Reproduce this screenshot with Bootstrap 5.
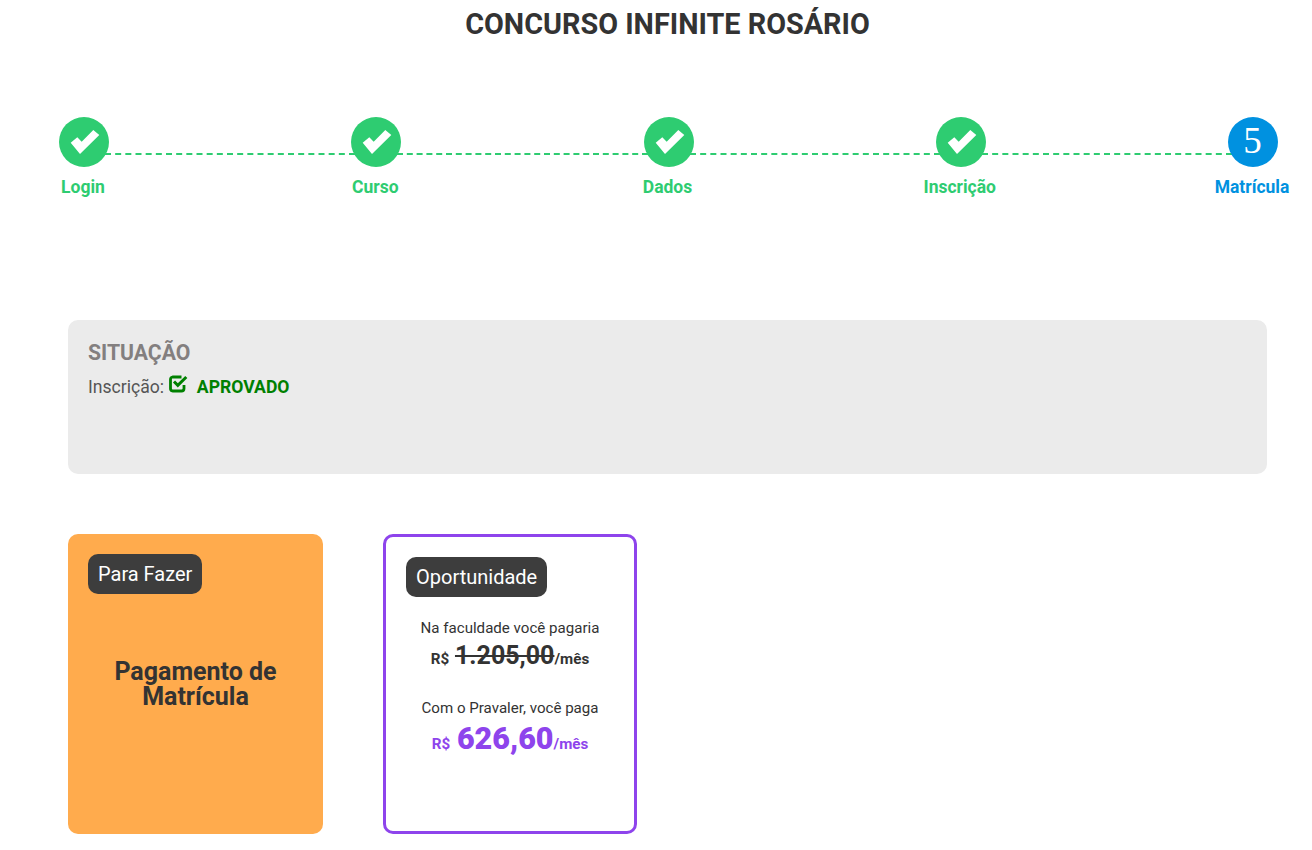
<!DOCTYPE html>
<html lang="pt-BR">
<head>
    <meta charset="UTF-8">
    <meta name="viewport" content="width=device-width, initial-scale=1.0">
    <title>Concurso Infinite Rosário</title>
    <link href="https://cdn.jsdelivr.net/npm/bootstrap@5.3.2/dist/css/bootstrap.min.css" rel="stylesheet">
    <style>
        body { font-family: Roboto, sans-serif; color: #333; background: #fff; overflow: hidden; }
        .page-title { font-size: 28.8px; font-weight: 700; line-height: 33px; color: #333; margin: 8px 0 0; padding-left: 23px; }
        .stepper { padding: 76px 34px 0 59px; }
        .step-item { width: 50px; flex: none; }
        .step-dot { width: 50px; height: 50px; border-radius: 50%; background: #2ecc71; }
        .step-dot.atual { background: #0091e0; color: #fff; font-family: "Liberation Serif", serif; font-size: 37px; line-height: 48px; padding-right: 1px; }
        .step-label { width: 100px; margin-left: -26px; margin-top: 9px; font-size: 17.5px; font-weight: 700; line-height: 23px; color: #2ecc71; }
        .step-label.atual { color: #0091e0; }
        .step-line { flex: 1 1 0; height: 2px; margin-top: 36px; border-top: 2px dashed #2ecc71; margin-left: -4px; margin-right: -4px; }
        .conteudo { margin: 121px 45px 0 68px; }
        .situacao { height: 154px; background: #ebebeb; border-radius: 10px; padding: 20px; }
        .situacao-titulo { font-size: 21.2px; font-weight: 700; line-height: 26px; color: #837f7f; }
        .situacao-linha { font-size: 17.6px; line-height: 24px; color: #555; margin-top: 9px; }
        .situacao-icone { margin-left: 1px; }
        .aprovado { color: #008000; font-weight: 700; margin-left: 4px; }
        .cards-linha { margin-top: 60px; gap: 60px; }
        .card-fazer { width: 255px; height: 300px; background: #ffab4d; border-radius: 10px; padding: 20px; }
        .card-oportunidade { width: 254px; height: 300px; border: 3px solid #8e44ec; border-radius: 10px; padding: 20px; }
        .etiqueta { display: inline-block; background: #3d3d3d; color: #fff; font-size: 20px; line-height: 24px; padding: 8px 10px; border-radius: 10px; }
        .card-fazer-texto { font-size: 25px; font-weight: 700; line-height: 25px; color: #333; margin-top: 65px; }
        .oferta-texto { font-size: 15.1px; line-height: 20px; margin-top: 21px; color: #333; }
        .oferta-preco { font-size: 15.2px; font-weight: 700; color: #333; line-height: 36px; }
        .oferta-preco s { font-size: 25px; margin-left: 2px; }
        .oferta-preco.roxo { color: #8e44ec; line-height: 42px; }
        .oferta-preco.roxo b { font-size: 30.5px; margin-left: 3px; }
        .oferta-bloco2 { margin-top: 20px; }
    </style>
</head>
<body>
    <h1 class="page-title text-center">CONCURSO INFINITE ROSÁRIO</h1>

    <div class="stepper d-flex">
        <div class="step-item">
            <div class="step-dot d-flex align-items-center justify-content-center"><svg width="32" height="32" viewBox="0 0 32 32"><polygon points="2.7,16.7 9.3,11.3 13.7,15.7 25.3,4 31.3,9 12,28" fill="#fff"/></svg></div>
            <div class="step-label text-center">Login</div>
        </div>
        <div class="step-line"></div>
        <div class="step-item">
            <div class="step-dot d-flex align-items-center justify-content-center"><svg width="32" height="32" viewBox="0 0 32 32"><polygon points="2.7,16.7 9.3,11.3 13.7,15.7 25.3,4 31.3,9 12,28" fill="#fff"/></svg></div>
            <div class="step-label text-center">Curso</div>
        </div>
        <div class="step-line"></div>
        <div class="step-item">
            <div class="step-dot d-flex align-items-center justify-content-center"><svg width="32" height="32" viewBox="0 0 32 32"><polygon points="2.7,16.7 9.3,11.3 13.7,15.7 25.3,4 31.3,9 12,28" fill="#fff"/></svg></div>
            <div class="step-label text-center">Dados</div>
        </div>
        <div class="step-line"></div>
        <div class="step-item">
            <div class="step-dot d-flex align-items-center justify-content-center"><svg width="32" height="32" viewBox="0 0 32 32"><polygon points="2.7,16.7 9.3,11.3 13.7,15.7 25.3,4 31.3,9 12,28" fill="#fff"/></svg></div>
            <div class="step-label text-center">Inscrição</div>
        </div>
        <div class="step-line"></div>
        <div class="step-item">
            <div class="step-dot atual text-center">5</div>
            <div class="step-label atual text-center">Matrícula</div>
        </div>
    </div>

    <div class="conteudo">
        <div class="situacao">
            <div class="situacao-titulo">SITUAÇÃO</div>
            <div class="situacao-linha">Inscrição:
                <svg width="19" height="18" viewBox="0 0 19 18" class="situacao-icone align-baseline"><path d="M15 10v3.5a2.5 2.5 0 0 1-2.5 2.5h-9A2.5 2.5 0 0 1 1.500 13.500v-9A2.500 2.500 0 0 1 3.500 2h9" fill="none" stroke="#008000" stroke-width="2.800"/><path d="M5 6.500 8.800 10.300 17.300 2" fill="none" stroke="#008000" stroke-width="3"/></svg>
                <span class="aprovado">APROVADO</span>
            </div>
        </div>

        <div class="cards-linha d-flex">
            <div class="card-fazer">
                <span class="etiqueta">Para Fazer</span>
                <div class="card-fazer-texto text-center">Pagamento de Matrícula</div>
            </div>
            <div class="card-oportunidade">
                <span class="etiqueta">Oportunidade</span>
                <div class="oferta-texto text-center">Na faculdade você pagaria</div>
                <div class="oferta-preco text-center">R$ <s>1.205,00</s>/mês</div>
                <div class="oferta-bloco2">
                    <div class="oferta-texto text-center">Com o Pravaler, você paga</div>
                    <div class="oferta-preco roxo text-center">R$ <b>626,60</b>/mês</div>
                </div>
            </div>
        </div>
    </div>

    <script src="https://cdn.jsdelivr.net/npm/bootstrap@5.3.2/dist/js/bootstrap.bundle.min.js"></script>
</body>
</html>
